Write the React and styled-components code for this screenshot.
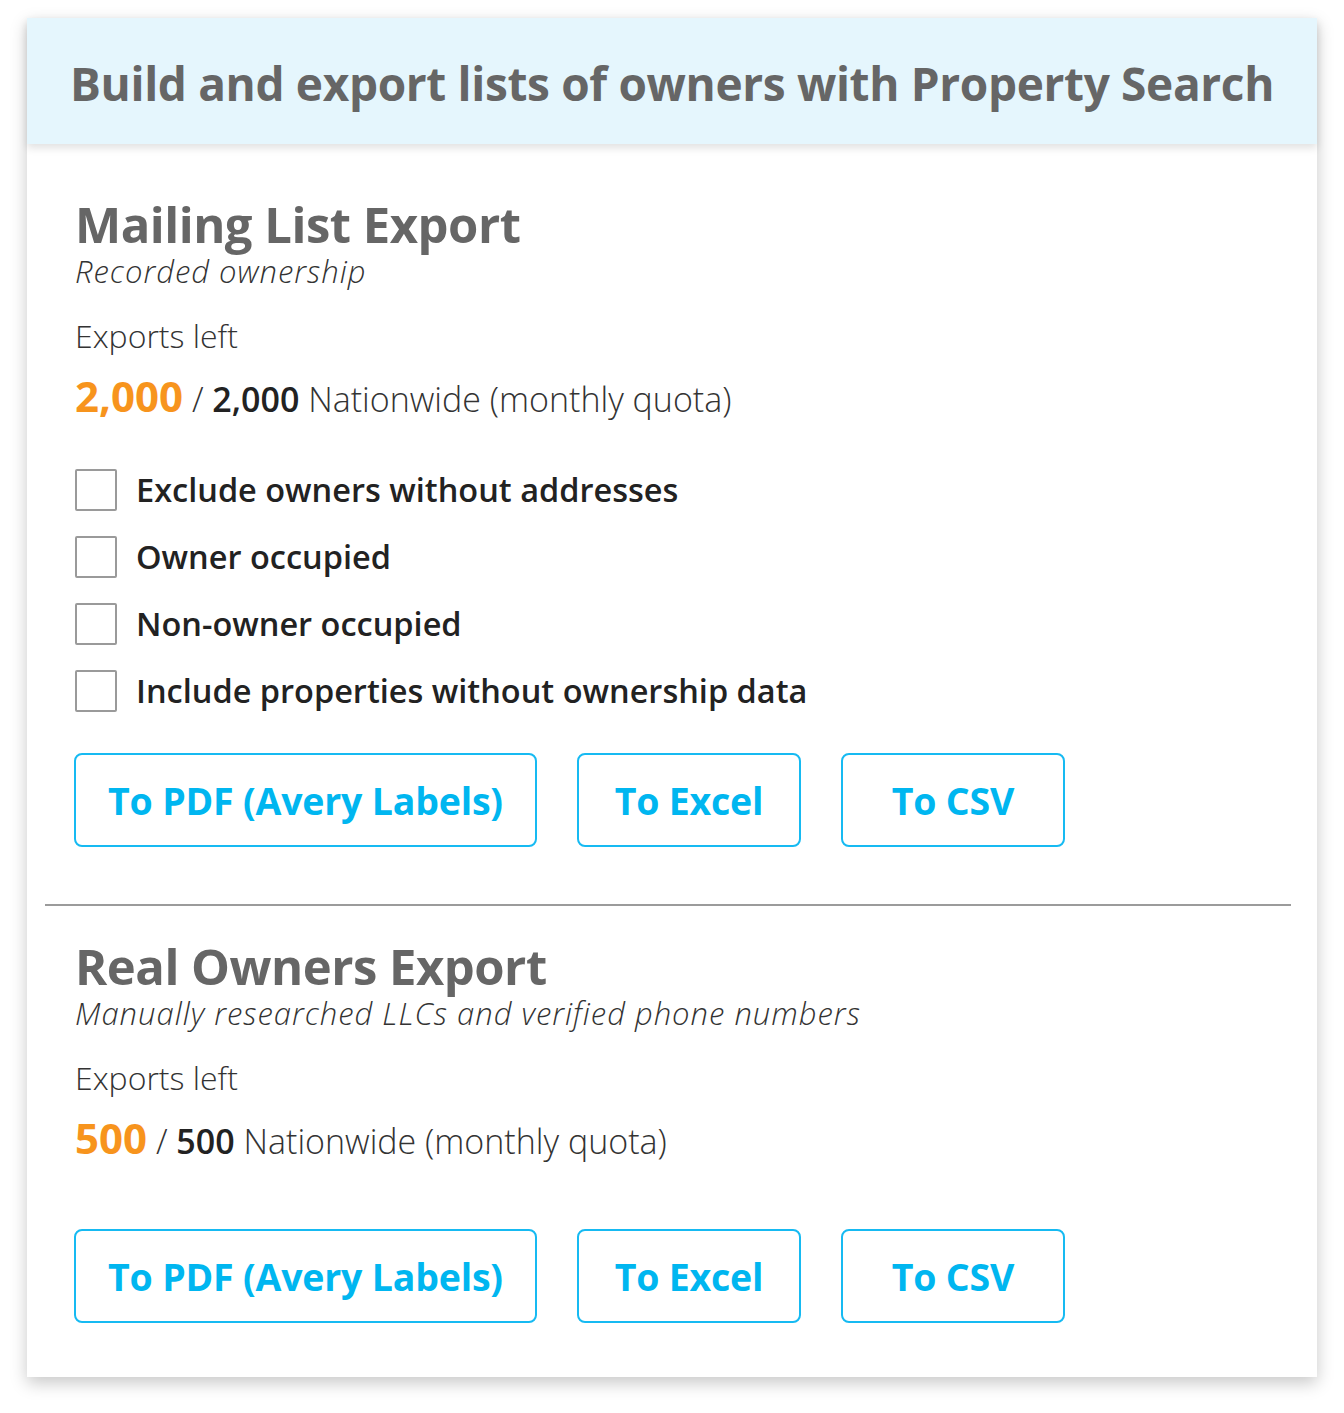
import React from "react";
import styled, { createGlobalStyle } from "styled-components";

const GlobalStyle = createGlobalStyle`
  body {
    margin: 0;
    background: #ffffff;
    font-family: "Open Sans", "Noto Sans", sans-serif;
  }
`;

const Page = styled.div`
  padding: 18px 27px 36px 27px;
`;

const Card = styled.div`
  background: #ffffff;
  box-shadow: 0 6px 16px rgba(0, 0, 0, 0.22);
  padding-bottom: 54px;
`;

const Header = styled.div`
  background: #e5f6fd;
  height: 126px;
  display: flex;
  align-items: center;
  padding-left: 43px;
  box-shadow: 0 4px 8px rgba(0, 0, 0, 0.12);
  font-size: 46px;
  font-weight: 700;
  color: #666666;
  letter-spacing: -0.35px;
  padding-top: 4px;
  box-sizing: border-box;
`;

const Section = styled.div`
  padding: ${(p) => p.$top}px 48px 0 48px;
`;

const Title = styled.h2`
  margin: 0;
  font-size: 49px;
  line-height: 56px;
  font-weight: 700;
  color: #666666;
  letter-spacing: -0.5px;
`;

const Subtitle = styled.div`
  margin-top: 2px;
  font-size: 31px;
  line-height: 34px;
  font-style: italic;
  font-weight: 300;
  color: #333333;
  letter-spacing: 1px;
`;

const Label = styled.div`
  margin-top: 30px;
  font-size: 32px;
  line-height: 36px;
  font-weight: 300;
  color: #333333;
`;

const Quota = styled.div`
  margin-top: 20px;
  font-size: 34px;
  line-height: 44px;
  font-weight: 300;
  color: #333333;
`;

const Left = styled.span`
  font-size: 42px;
  font-weight: 700;
  color: #f7941d;
`;

const Total = styled.span`
  font-weight: 600;
  color: #222222;
`;

const Options = styled.div`
  margin-top: 48px;
  display: flex;
  flex-direction: column;
  gap: 26px;
`;

const Option = styled.label`
  display: flex;
  align-items: center;
  gap: 19px;
  height: 41px;
  font-size: 32.5px;
  font-weight: 600;
  color: #222222;
`;

const Box = styled.span`
  width: 38px;
  height: 38px;
  border: 2px solid #9a9a9a;
  border-radius: 2px;
  background: #ffffff;
  flex-shrink: 0;
`;

const Buttons = styled.div`
  margin-top: ${(p) => p.$top}px;
  margin-left: -1px;
  display: flex;
  gap: 40px;
`;

const Button = styled.button`
  height: 94px;
  width: ${(p) => p.$w}px;
  border: 2px solid #16baf2;
  border-radius: 8px;
  background: #ffffff;
  font-family: inherit;
  font-size: 37.5px;
  font-weight: 700;
  color: #00b6f0;
  letter-spacing: -0.2px;
  cursor: pointer;
`;

const Divider = styled.hr`
  margin: 57px 26px 0 18px;
  border: none;
  border-top: 2px solid #9b9b9b;
`;

const exports = [
  {
    id: "mailing",
    title: "Mailing List Export",
    subtitle: "Recorded ownership",
    left: "2,000",
    total: "2,000",
    options: [
      "Exclude owners without addresses",
      "Owner occupied",
      "Non-owner occupied",
      "Include properties without ownership data",
    ],
  },
  {
    id: "real",
    title: "Real Owners Export",
    subtitle: "Manually researched LLCs and verified phone numbers",
    left: "500",
    total: "500",
    options: [],
  },
];

const ExportSection = ({ data, top }) => (
  <Section $top={top}>
    <Title>{data.title}</Title>
    <Subtitle>{data.subtitle}</Subtitle>
    <Label>Exports left</Label>
    <Quota>
      <Left>{data.left}</Left> / <Total>{data.total}</Total> Nationwide (monthly quota)
    </Quota>
    {data.options.length > 0 && (
      <Options>
        {data.options.map((o) => (
          <Option key={o}>
            <Box />
            {o}
          </Option>
        ))}
      </Options>
    )}
    <Buttons $top={data.options.length ? 42 : 66}>
      <Button $w={463}>To PDF (Avery Labels)</Button>
      <Button $w={224}>To Excel</Button>
      <Button $w={224}>To CSV</Button>
    </Buttons>
  </Section>
);

export default function App() {
  return (
    <>
      <GlobalStyle />
      <Page>
        <Card>
          <Header>Build and export lists of owners with Property Search</Header>
          <ExportSection data={exports[0]} top={52} />
          <Divider />
          <ExportSection data={exports[1]} top={32} />
        </Card>
      </Page>
    </>
  );
}
